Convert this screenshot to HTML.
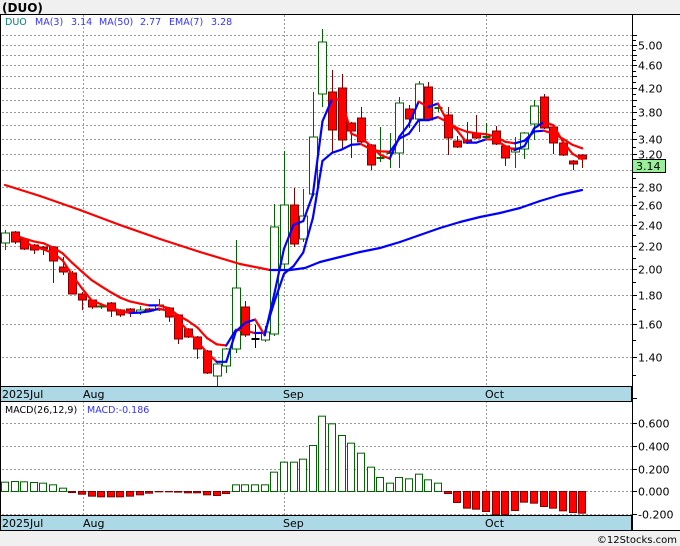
<!DOCTYPE html>
<html><head><meta charset="utf-8">
<style>
html,body{margin:0;padding:0;background:#fff;}
svg{display:block;}
text{font-family:"DejaVu Sans","Liberation Sans",sans-serif;}
</style></head>
<body>
<svg id="s" width="680" height="546" xmlns="http://www.w3.org/2000/svg">
<rect x="0" y="0" width="680" height="546" fill="#fff"/>
<rect x="0" y="0" width="680" height="14" fill="#f0f0f0"/>
<text x="2" y="12" font-size="12" font-weight="bold" font-family="Liberation Sans">(DUO)</text>
<g id="g"></g>
</svg>
<script>
var NS="http://www.w3.org/2000/svg",G=document.getElementById('g');
function el(t,a,txt){var e=document.createElementNS(NS,t);for(var k in a)e.setAttribute(k,a[k]);if(txt!=null)e.textContent=txt;G.appendChild(e);return e;}
var A=439.3,B=245;
function py(p){return A-B*Math.log(p);}
function yp(y){return Math.exp((A-y)/B);}
var labels={"5.00":1,"4.60":1,"4.20":1,"3.80":1,"3.40":1,"3.20":1,"2.80":1,"2.60":1,"2.40":1,"2.20":1,"2.00":1,"1.80":1,"1.60":1,"1.40":1};
for(var p=1.4;p<5.25;p+=0.2){var y=Math.round(py(p))+0.5;el('line',{x1:2,x2:632,y1:y,y2:y,stroke:'#999','stroke-dasharray':'2,2','stroke-width':1});el('line',{x1:632,x2:637,y1:y,y2:y,stroke:'#000'});
 var s=p.toFixed(2);if(labels[s])el('text',{x:638,y:y+4,'font-size':11,fill:'#000'},s);}
for(var p=1.3;p<5.3;p+=0.2){var y=Math.round(py(p))+0.5;el('line',{x1:632,x2:636,y1:y,y2:y,stroke:'#000'});}
[83,284,486].forEach(function(x){el('line',{x1:x+.5,x2:x+.5,y1:15,y2:386,stroke:'#999','stroke-dasharray':'2,2'});el('line',{x1:x+.5,x2:x+.5,y1:401,y2:515,stroke:'#999','stroke-dasharray':'2,2'});});
var C=[['g',233,243,230,250],['r',232,242,231,244],['r',239,249,238,250],['r',245,250,244,254],['r',247,249,246,255],['r',247,261,246,283],['r',267,272,257,275],['r',273,294,271,294],['r',294,300,292,310],['r',300,307,300,309],
['g',306,307,305,309],['r',303,311,302,317],['r',310,315,309,317],['r',309,313,308,317],['g',310,312,306,315],['r',309,311,308,312],['g',305,310,299,311],['r',308,317,307,322],['r',315,339,314,344],['r',329,337,328,338],
['r',337,349,336,359],['r',351,373,350,374],['g',364,376,363,387],['g',349,366,348,373],['g',288,349,240,353],['r',307,335,301,337],['x',339,339,325,348],['g',332,340,326,342],['g',227,334,204,336],['g',205,264,151,269],
['r',205,244,188,247],['g',216,239,189,242],['g',137,194,92,196],['g',42,94,29,107],['r',92,130,70,152],['r',88,140,74,148],['r',123,131,122,158],['r',118,142,107,143],['r',145,165,144,170],['gx',158,158,127,162],
['gx',153,153,133,168],['g',103,153,97,168],['r',109,119,105,128],['g',84,119,81,132],['r',87,120,82,121],['gx',108,108,105,112],['r',115,138,107,155],['r',141,147,136,148],['r',140,143,122,144],['r',133,138,115,139],
['gx',137,137,123,140],['r',131,144,126,145],['r',146,158,145,166],['g',148,152,137,168],['g',133,149,132,159],['g',106,124,100,140],['r',97,128,94,129],['r',127,143,126,154],['r',143,155,140,156],['r',161,164,160,170],['r',155,159,154,168]];
var X=function(i){return 5+9.62*i;};
var closes=[];
C.forEach(function(c,i){var x=Math.round(X(i))+0.5,t=c[0];
 var col=t[0]=='g'?'#006400':(t=='x'?'#000':'#800000');
 el('line',{x1:x,x2:x,y1:c[3],y2:c[4],stroke:col});
 if(t=='g')el('rect',{x:x-4,y:c[1],width:8,height:Math.max(1,c[2]-c[1]),fill:'#fff',stroke:col});
 else if(t=='r')el('rect',{x:x-4,y:c[1],width:8,height:Math.max(1,c[2]-c[1]),fill:'#ff0000',stroke:col});
 else el('line',{x1:x-4,x2:x+4,y1:c[1],y2:c[1],stroke:col,'stroke-width':2});
 closes.push(yp(t[0]=='g'?c[1]:(t=='r'?c[2]:c[1])));
});
function drawLine(pts){for(var i=1;i<pts.length;i++){var a=pts[i-1],b=pts[i];el('line',{x1:a[0],y1:a[1],x2:b[0],y2:b[1],stroke:b[1]>a[1]+0.3?'#ff0000':'#0000ff','stroke-width':2.2,'stroke-linecap':'round'});}}
drawLine([[5,185],[40,196],[80,210],[120,225],[160,239],[200,252],[240,264],[270,270],[290,270],[305,268],[320,262],[340,257],[360,252],[380,248],[400,242],[420,235],[440,228],[460,222],[480,217],[500,213],[520,208],[540,201],[560,195],[582,190]]);
var m3=[];for(var i=2;i<closes.length;i++){m3.push([X(i),py((closes[i]+closes[i-1]+closes[i-2])/3)]);}
var e=[],ev=closes[0],k=2/8;for(var i=0;i<closes.length;i++){ev=i==0?closes[0]:closes[i]*k+ev*(1-k);if(i>=1)e.push([X(i),py(ev)]);}
drawLine(e);drawLine(m3);
el('text',{x:5,y:25,'font-size':9.5,fill:'#008080'},'DUO');
[[35,'MA(3)'],[71,'3.14'],[99,'MA(50)'],[140,'2.77'],[169,'EMA(7)'],[211,'3.28']].forEach(function(a){el('text',{x:a[0],y:25,'font-size':9.5,fill:'#3333ff'},a[1]);});
el('rect',{x:632.5,y:159.5,width:33,height:13,fill:'#99ee99',stroke:'#000'});
el('text',{x:636,y:170,'font-size':11,fill:'#000'},'3.14');
function band(y){el('rect',{x:0.5,y:y+.5,width:631,height:15,fill:'#add8e6',stroke:'#000'});
 el('text',{x:2,y:y+12,'font-size':11,fill:'#000'},'2025Jul');el('text',{x:83,y:y+12,'font-size':11},'Aug');el('text',{x:283,y:y+12,'font-size':11},'Sep');el('text',{x:485,y:y+12,'font-size':11},'Oct');}
band(386);band(515);
el('line',{x1:632,x2:637,y1:398.5,y2:398.5,stroke:'#000'});
var Z=491;
[[0.6,423],[0.4,446],[0.2,469],[0,491],[-0.2,514]].forEach(function(v){var y=v[1]+.5;el('line',{x1:2,x2:632,y1:y,y2:y,stroke:'#999','stroke-dasharray':'2,2'});el('line',{x1:632,x2:637,y1:y,y2:y,stroke:'#000'});el('text',{x:638,y:y+4,'font-size':11},(v[0]<0?'-':'')+Math.abs(v[0]).toFixed(3));});
var H=[28,30,29,27,25,20,10,-3,-8,-14,-16,-16,-16,-14,-10,-5,-1,-1,-2,-4,-4,-10,-12,-6,20,20,20,20,58,88,88,97,138,226,203,168,145,115,73,42,25,42,38,52,35,25,-6,-33,-50,-53,-60,-70,-75,-57,-32,-35,-45,-50,-58,-63,-65];
H.forEach(function(h,i){var x=Math.round(X(i))-3.5,v=h/3;
 if(h>=0)el('rect',{x:x,y:Z-v+.5,width:7,height:Math.max(0.5,v),fill:'#fff',stroke:'#006400'});
 else el('rect',{x:x,y:Z+.5,width:7,height:Math.min(-v,23),fill:'#ff0000',stroke:'#800000'});});
el('text',{x:5,y:413,'font-size':9.5,fill:'#000'},'MACD(26,12,9)');
el('text',{x:87,y:413,'font-size':9.5,fill:'#3333ff'},'MACD:-0.186');
el('line',{x1:0,x2:680,y1:14.5,y2:14.5,stroke:'#000'});
el('line',{x1:632.5,x2:632.5,y1:14,y2:530,stroke:'#000'});
el('line',{x1:0.5,x2:0.5,y1:14,y2:530,stroke:'#000'});
el('line',{x1:0,x2:680,y1:530.5,y2:530.5,stroke:'#000'});
el('rect',{x:0,y:531,width:680,height:15,fill:'#f0f0f0'});
el('text',{x:677,y:543,'font-size':10,'text-anchor':'end',fill:'#000'},'©12Stocks.com');
</script>
</body></html>
